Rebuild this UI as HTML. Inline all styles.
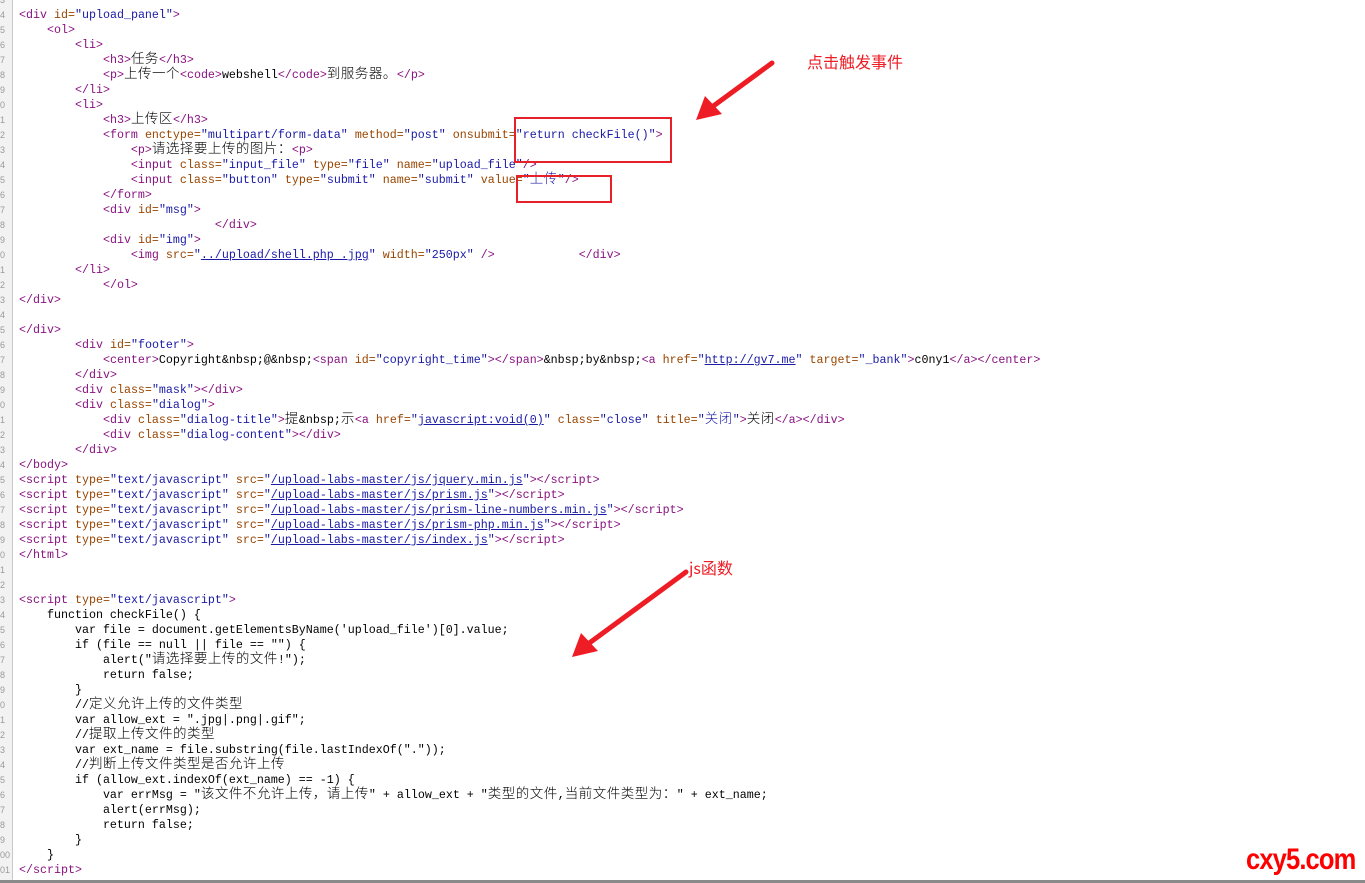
<!DOCTYPE html>
<html><head><meta charset="utf-8">
<style>
body{margin:0;width:1365px;height:883px;background:#fff;position:relative;overflow:hidden;font-family:"Liberation Mono","Noto Sans CJK SC",monospace;}
#gut{position:absolute;left:0;top:0;width:12px;height:880px;background:#f2f2f2;border-right:1px solid #c8c8c8;}
.n{position:absolute;left:-5px;width:17px;height:15px;font:9px/15px "Liberation Sans",sans-serif;color:#9a9a9a;}
.l{position:absolute;left:19px;height:15px;line-height:15px;font-size:11.667px;white-space:pre;color:#000;}
i{font-style:normal;font-family:"Noto Sans CJK SC",sans-serif;font-size:13.5px;letter-spacing:0.5px;line-height:0;font-weight:300;}
.t{color:#881280}.a{color:#994500}.v{color:#1a1aa6}.u{color:#1a1aa6;text-decoration:underline}
.box{position:absolute;border:2px solid #e8202a;}
.lab{position:absolute;color:#ee1c24;font-family:"Noto Sans CJK SC",sans-serif;font-size:16px;}
#bot{position:absolute;left:0;top:880px;width:1365px;height:3px;background:#8a8a8a;}
.wm{position:absolute;left:1246px;top:842px;color:#ff0000;font:bold 30px/36px "Liberation Sans",sans-serif;letter-spacing:-1px;transform:scaleX(0.85);transform-origin:left;}
</style></head><body>
<div id="gut"></div>
<div id="lines">
<div class="n" style="top:-7px">43</div>
<div class="n" style="top:8px">44</div><div class="l" style="top:8px"><span class="t">&lt;div </span><span class="a">id=</span><span class="v">"upload_panel"</span><span class="t">&gt;</span></div>
<div class="n" style="top:23px">45</div><div class="l" style="top:23px">    <span class="t">&lt;ol&gt;</span></div>
<div class="n" style="top:38px">46</div><div class="l" style="top:38px">        <span class="t">&lt;li&gt;</span></div>
<div class="n" style="top:53px">47</div><div class="l" style="top:53px">            <span class="t">&lt;h3&gt;</span><i>任务</i><span class="t">&lt;/h3&gt;</span></div>
<div class="n" style="top:68px">48</div><div class="l" style="top:68px">            <span class="t">&lt;p&gt;</span><i>上传一个</i><span class="t">&lt;code&gt;</span>webshell<span class="t">&lt;/code&gt;</span><i>到服务器。</i><span class="t">&lt;/p&gt;</span></div>
<div class="n" style="top:83px">49</div><div class="l" style="top:83px">        <span class="t">&lt;/li&gt;</span></div>
<div class="n" style="top:98px">50</div><div class="l" style="top:98px">        <span class="t">&lt;li&gt;</span></div>
<div class="n" style="top:113px">51</div><div class="l" style="top:113px">            <span class="t">&lt;h3&gt;</span><i>上传区</i><span class="t">&lt;/h3&gt;</span></div>
<div class="n" style="top:128px">52</div><div class="l" style="top:128px">            <span class="t">&lt;form </span><span class="a">enctype=</span><span class="v">"multipart/form-data"</span> <span class="a">method=</span><span class="v">"post"</span> <span class="a">onsubmit=</span><span class="v">"return checkFile()"</span><span class="t">&gt;</span></div>
<div class="n" style="top:143px">53</div><div class="l" style="top:143px">                <span class="t">&lt;p&gt;</span><i>请选择要上传的图片：</i><span class="t">&lt;p&gt;</span></div>
<div class="n" style="top:158px">54</div><div class="l" style="top:158px">                <span class="t">&lt;input </span><span class="a">class=</span><span class="v">"input_file"</span> <span class="a">type=</span><span class="v">"file"</span> <span class="a">name=</span><span class="v">"upload_file"</span><span class="t">/&gt;</span></div>
<div class="n" style="top:173px">55</div><div class="l" style="top:173px">                <span class="t">&lt;input </span><span class="a">class=</span><span class="v">"button"</span> <span class="a">type=</span><span class="v">"submit"</span> <span class="a">name=</span><span class="v">"submit"</span> <span class="a">value=</span><span class="v">"<i>上传</i>"</span><span class="t">/&gt;</span></div>
<div class="n" style="top:188px">56</div><div class="l" style="top:188px">            <span class="t">&lt;/form&gt;</span></div>
<div class="n" style="top:203px">57</div><div class="l" style="top:203px">            <span class="t">&lt;div </span><span class="a">id=</span><span class="v">"msg"</span><span class="t">&gt;</span></div>
<div class="n" style="top:218px">58</div><div class="l" style="top:218px">                            <span class="t">&lt;/div&gt;</span></div>
<div class="n" style="top:233px">59</div><div class="l" style="top:233px">            <span class="t">&lt;div </span><span class="a">id=</span><span class="v">"img"</span><span class="t">&gt;</span></div>
<div class="n" style="top:248px">60</div><div class="l" style="top:248px">                <span class="t">&lt;img </span><span class="a">src=</span><span class="v">"<span class="u">../upload/shell.php .jpg</span>"</span> <span class="a">width=</span><span class="v">"250px"</span> <span class="t">/&gt;</span>            <span class="t">&lt;/div&gt;</span></div>
<div class="n" style="top:263px">61</div><div class="l" style="top:263px">        <span class="t">&lt;/li&gt;</span></div>
<div class="n" style="top:278px">62</div><div class="l" style="top:278px">            <span class="t">&lt;/ol&gt;</span></div>
<div class="n" style="top:293px">63</div><div class="l" style="top:293px"><span class="t">&lt;/div&gt;</span></div>
<div class="n" style="top:308px">64</div>
<div class="n" style="top:323px">65</div><div class="l" style="top:323px"><span class="t">&lt;/div&gt;</span></div>
<div class="n" style="top:338px">66</div><div class="l" style="top:338px">        <span class="t">&lt;div </span><span class="a">id=</span><span class="v">"footer"</span><span class="t">&gt;</span></div>
<div class="n" style="top:353px">67</div><div class="l" style="top:353px">            <span class="t">&lt;center&gt;</span>Copyright&amp;nbsp;@&amp;nbsp;<span class="t">&lt;span </span><span class="a">id=</span><span class="v">"copyright_time"</span><span class="t">&gt;&lt;/span&gt;</span>&amp;nbsp;by&amp;nbsp;<span class="t">&lt;a </span><span class="a">href=</span><span class="v">"<span class="u">http://gv7.me</span>"</span> <span class="a">target=</span><span class="v">"_bank"</span><span class="t">&gt;</span>c0ny1<span class="t">&lt;/a&gt;&lt;/center&gt;</span></div>
<div class="n" style="top:368px">68</div><div class="l" style="top:368px">        <span class="t">&lt;/div&gt;</span></div>
<div class="n" style="top:383px">69</div><div class="l" style="top:383px">        <span class="t">&lt;div </span><span class="a">class=</span><span class="v">"mask"</span><span class="t">&gt;&lt;/div&gt;</span></div>
<div class="n" style="top:398px">70</div><div class="l" style="top:398px">        <span class="t">&lt;div </span><span class="a">class=</span><span class="v">"dialog"</span><span class="t">&gt;</span></div>
<div class="n" style="top:413px">71</div><div class="l" style="top:413px">            <span class="t">&lt;div </span><span class="a">class=</span><span class="v">"dialog-title"</span><span class="t">&gt;</span><i>提</i>&amp;nbsp;<i>示</i><span class="t">&lt;a </span><span class="a">href=</span><span class="v">"<span class="u">javascript:void(0)</span>"</span> <span class="a">class=</span><span class="v">"close"</span> <span class="a">title=</span><span class="v">"<i>关闭</i>"</span><span class="t">&gt;</span><i>关闭</i><span class="t">&lt;/a&gt;&lt;/div&gt;</span></div>
<div class="n" style="top:428px">72</div><div class="l" style="top:428px">            <span class="t">&lt;div </span><span class="a">class=</span><span class="v">"dialog-content"</span><span class="t">&gt;&lt;/div&gt;</span></div>
<div class="n" style="top:443px">73</div><div class="l" style="top:443px">        <span class="t">&lt;/div&gt;</span></div>
<div class="n" style="top:458px">74</div><div class="l" style="top:458px"><span class="t">&lt;/body&gt;</span></div>
<div class="n" style="top:473px">75</div><div class="l" style="top:473px"><span class="t">&lt;script </span><span class="a">type=</span><span class="v">"text/javascript"</span> <span class="a">src=</span><span class="v">"<span class="u">/upload-labs-master/js/jquery.min.js</span>"</span><span class="t">&gt;&lt;/script&gt;</span></div>
<div class="n" style="top:488px">76</div><div class="l" style="top:488px"><span class="t">&lt;script </span><span class="a">type=</span><span class="v">"text/javascript"</span> <span class="a">src=</span><span class="v">"<span class="u">/upload-labs-master/js/prism.js</span>"</span><span class="t">&gt;&lt;/script&gt;</span></div>
<div class="n" style="top:503px">77</div><div class="l" style="top:503px"><span class="t">&lt;script </span><span class="a">type=</span><span class="v">"text/javascript"</span> <span class="a">src=</span><span class="v">"<span class="u">/upload-labs-master/js/prism-line-numbers.min.js</span>"</span><span class="t">&gt;&lt;/script&gt;</span></div>
<div class="n" style="top:518px">78</div><div class="l" style="top:518px"><span class="t">&lt;script </span><span class="a">type=</span><span class="v">"text/javascript"</span> <span class="a">src=</span><span class="v">"<span class="u">/upload-labs-master/js/prism-php.min.js</span>"</span><span class="t">&gt;&lt;/script&gt;</span></div>
<div class="n" style="top:533px">79</div><div class="l" style="top:533px"><span class="t">&lt;script </span><span class="a">type=</span><span class="v">"text/javascript"</span> <span class="a">src=</span><span class="v">"<span class="u">/upload-labs-master/js/index.js</span>"</span><span class="t">&gt;&lt;/script&gt;</span></div>
<div class="n" style="top:548px">80</div><div class="l" style="top:548px"><span class="t">&lt;/html&gt;</span></div>
<div class="n" style="top:563px">81</div>
<div class="n" style="top:578px">82</div>
<div class="n" style="top:593px">83</div><div class="l" style="top:593px"><span class="t">&lt;script </span><span class="a">type=</span><span class="v">"text/javascript"</span><span class="t">&gt;</span></div>
<div class="n" style="top:608px">84</div><div class="l" style="top:608px">    function checkFile() {</div>
<div class="n" style="top:623px">85</div><div class="l" style="top:623px">        var file = document.getElementsByName('upload_file')[0].value;</div>
<div class="n" style="top:638px">86</div><div class="l" style="top:638px">        if (file == null || file == "") {</div>
<div class="n" style="top:653px">87</div><div class="l" style="top:653px">            alert("<i>请选择要上传的文件</i>!");</div>
<div class="n" style="top:668px">88</div><div class="l" style="top:668px">            return false;</div>
<div class="n" style="top:683px">89</div><div class="l" style="top:683px">        }</div>
<div class="n" style="top:698px">90</div><div class="l" style="top:698px">        //<i>定义允许上传的文件类型</i></div>
<div class="n" style="top:713px">91</div><div class="l" style="top:713px">        var allow_ext = ".jpg|.png|.gif";</div>
<div class="n" style="top:728px">92</div><div class="l" style="top:728px">        //<i>提取上传文件的类型</i></div>
<div class="n" style="top:743px">93</div><div class="l" style="top:743px">        var ext_name = file.substring(file.lastIndexOf("."));</div>
<div class="n" style="top:758px">94</div><div class="l" style="top:758px">        //<i>判断上传文件类型是否允许上传</i></div>
<div class="n" style="top:773px">95</div><div class="l" style="top:773px">        if (allow_ext.indexOf(ext_name) == -1) {</div>
<div class="n" style="top:788px">96</div><div class="l" style="top:788px">            var errMsg = "<i>该文件不允许上传，请上传</i>" + allow_ext + "<i>类型的文件</i>,<i>当前文件类型为：</i>" + ext_name;</div>
<div class="n" style="top:803px">97</div><div class="l" style="top:803px">            alert(errMsg);</div>
<div class="n" style="top:818px">98</div><div class="l" style="top:818px">            return false;</div>
<div class="n" style="top:833px">99</div><div class="l" style="top:833px">        }</div>
<div class="n" style="top:848px">100</div><div class="l" style="top:848px">    }</div>
<div class="n" style="top:863px">101</div><div class="l" style="top:863px"><span class="t">&lt;/script&gt;</span></div>
</div>
<div class="box" style="left:514px;top:117px;width:154px;height:42px;"></div>
<div class="box" style="left:516px;top:175px;width:92px;height:24px;"></div>
<svg style="position:absolute;left:0;top:0" width="1365" height="883">
<line x1="772" y1="63" x2="712" y2="107" stroke="#ee1c24" stroke-width="5" stroke-linecap="round"/>
<polygon points="696,120 705,96 722,114" fill="#ee1c24"/>
<line x1="686" y1="572" x2="588" y2="644" stroke="#ee1c24" stroke-width="5" stroke-linecap="round"/>
<polygon points="572,657 581,633 598,651" fill="#ee1c24"/>
</svg>
<div class="lab" style="left:807px;top:49px;">点击触发事件</div>
<div class="lab" style="left:689px;top:555px;">js函数</div>
<div id="bot"></div>
<div class="wm">cxy5.com</div>
</body></html>
